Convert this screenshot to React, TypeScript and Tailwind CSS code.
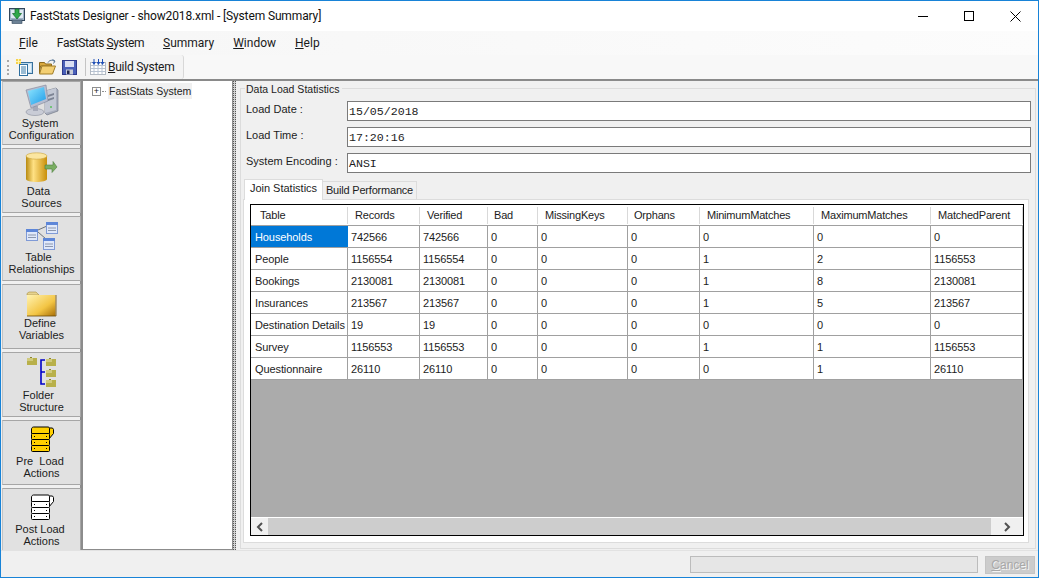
import type { ReactNode } from "react";

const COLS = "grid grid-cols-[97px_72px_68px_50px_90px_72px_114px_117px_92px]";

const HEADERS = [
  { label: "Table", pad: "pl-[9px]" },
  { label: "Records", pad: "pl-[7px]" },
  { label: "Verified", pad: "pl-[7px]" },
  { label: "Bad", pad: "pl-[6px]" },
  { label: "MissingKeys", pad: "pl-[7px]" },
  { label: "Orphans", pad: "pl-[6px]" },
  { label: "MinimumMatches", pad: "pl-[7px]" },
  { label: "MaximumMatches", pad: "pl-[7px]" },
  { label: "MatchedParent", pad: "pl-[7px]" },
];

const ROWS = [
  ["Households", "742566", "742566", "0", "0", "0", "0", "0", "0"],
  ["People", "1156554", "1156554", "0", "0", "0", "1", "2", "1156553"],
  ["Bookings", "2130081", "2130081", "0", "0", "0", "1", "8", "2130081"],
  ["Insurances", "213567", "213567", "0", "0", "0", "1", "5", "213567"],
  ["Destination Details", "19", "19", "0", "0", "0", "0", "0", "0"],
  ["Survey", "1156553", "1156553", "0", "0", "0", "1", "1", "1156553"],
  ["Questionnaire", "26110", "26110", "0", "0", "0", "0", "1", "26110"],
];

function AppIcon() {
  return (
    <svg width="16" height="16" viewBox="0 0 16 16">
      <rect x="0.5" y="0.5" width="15" height="12" fill="#9fb4c8" stroke="#33475c" />
      <rect x="2" y="2" width="12" height="8" fill="#dfe9f2" />
      <rect x="3" y="12" width="10" height="3.5" fill="#6d8296" stroke="#33475c" strokeWidth="0.6" />
      <path d="M6 1h4v4.5h2.5L8 11 3.5 5.5H6z" fill="#2fa84a" stroke="#11692a" strokeWidth="0.7" />
    </svg>
  );
}

function NewIcon() {
  return (
    <svg width="17" height="17" viewBox="0 0 17 17">
      <rect x="3.5" y="3.5" width="13" height="11" fill="#bcd9ee" stroke="#37709c" />
      <rect x="9" y="5" width="6" height="8" fill="#e6f2fa" />
      <rect x="3.5" y="5.5" width="8" height="11" fill="#fff" stroke="#2f6f9f" />
      <path d="M5 8h5M5 10h5M5 12h5M5 14h5" stroke="#3578a8" />
      <path d="M0 0h5v5H0z" fill="#f6d24a" />
      <path d="M2.5 0v5M0 2.5h5" stroke="#fff3b0" />
    </svg>
  );
}

function OpenIcon() {
  return (
    <svg width="17" height="16" viewBox="0 0 17 16">
      <path d="M0.5 3.5h5l1 1.5h6v2h-11l-1 7z" fill="#d9a93f" stroke="#8c6a1e" />
      <path d="M3 7h13.5l-3 8H0.5z" fill="#f3cf73" stroke="#a07c26" />
      <path d="M9 3.5C10.5 1 13 .8 15 2" fill="none" stroke="#4d6d8f" />
      <path d="M13.5 0.5l2.5 1.5-1.5 2.5" fill="none" stroke="#4d6d8f" />
    </svg>
  );
}

function SaveIcon() {
  return (
    <svg width="15" height="15" viewBox="0 0 15 15">
      <rect x="0.5" y="0.5" width="14" height="14" fill="#4a60b8" stroke="#2f3b8c" />
      <rect x="3" y="1" width="9" height="6" fill="#d9def2" />
      <rect x="4" y="9.5" width="7" height="5" fill="#c9cdd8" />
      <rect x="5" y="10.5" width="2.5" height="3.5" fill="#20264f" />
    </svg>
  );
}

function BuildIcon() {
  return (
    <svg width="16" height="16" viewBox="0 0 16 16">
      <rect x="0.5" y="3.5" width="15" height="12" fill="#fff" stroke="#6c7a8c" strokeDasharray="1 1" />
      <path d="M1 6.5h14M1 9.5h14M1 12.5h14M4 4v11M8 4v11M12 4v11" stroke="#b8c3d2" />
      <path d="M3.5 0v3H2l2 3 2-3H4.5V0zM8 0v3H6.5l2 3 2-3H9V0zM12 0v3h-1.5l2 3 2-3H13V0z" fill="#2050b8" />
    </svg>
  );
}

function ComputerIcon() {
  return (
    <svg width="36" height="35" viewBox="0 0 36 35">
      <defs>
        <linearGradient id="screen" x1="0" y1="0" x2="1" y2="1">
          <stop offset="0" stopColor="#8fe6ff" />
          <stop offset="1" stopColor="#1e9be8" />
        </linearGradient>
      </defs>
      <path d="M21 9l11-3 2 2v21l-11 4-2-2z" fill="#a8aebd" stroke="#6a7080" strokeWidth="0.6" />
      <path d="M21 9l11-3v22l-11 3z" fill="#c3c8d4" />
      <path d="M24 13l6-2v2l-6 2zM24 17l6-2v2l-6 2z" fill="#7d8494" />
      <circle cx="27" cy="25" r="1" fill="#59c15a" />
      <ellipse cx="11" cy="30" rx="9" ry="3.5" fill="#c9ccd6" stroke="#888d9c" strokeWidth="0.6" />
      <path d="M9 24h5v5H9z" fill="#a5a9b8" />
      <path d="M2 8l20-5 2 16-17 7z" fill="#b6bcd0" stroke="#7d8396" strokeWidth="0.6" />
      <path d="M4 9l16-4 2 12-15 6z" fill="url(#screen)" />
    </svg>
  );
}

function DataIcon() {
  return (
    <svg width="36" height="36" viewBox="0 0 36 36">
      <defs>
        <linearGradient id="cyl" x1="0" y1="0" x2="1" y2="0">
          <stop offset="0" stopColor="#b88a10" />
          <stop offset="0.35" stopColor="#ffe184" />
          <stop offset="1" stopColor="#c98f0a" />
        </linearGradient>
      </defs>
      <path d="M2 7v23c0 4 21 4 21 0V7z" fill="url(#cyl)" />
      <ellipse cx="12.5" cy="7" rx="10.5" ry="3.2" fill="#fbe6a0" stroke="#c9a23a" strokeWidth="0.6" />
      <path d="M21 16h8v-3.5L33 18l-5 5.5V20h-7z" fill="#79ad62" stroke="#4e8040" strokeWidth="0.6" />
    </svg>
  );
}

function MiniTable({ x, y }: { x: number; y: number }) {
  return (
    <g>
      <rect x={x + 0.5} y={y + 0.5} width="11" height="11" fill="#dfe8fa" stroke="#7f9ad6" />
      <rect x={x} y={y} width="12" height="3" fill="#5d86d8" />
      <path d={`M${x + 2} ${y + 6}h8M${x + 2} ${y + 8.5}h8`} stroke="#8c97ad" />
    </g>
  );
}

function TablesIcon() {
  return (
    <svg width="36" height="34" viewBox="0 0 36 34">
      <path d="M14 13l9-4M14 15l8 7" stroke="#6d7278" fill="none" />
      <MiniTable x={2} y={12} />
      <MiniTable x={22} y={5} />
      <MiniTable x={19} y={21} />
    </svg>
  );
}

function FolderIcon() {
  return (
    <svg width="36" height="32" viewBox="0 0 36 32">
      <defs>
        <linearGradient id="fold" x1="0" y1="0" x2="1" y2="1">
          <stop offset="0" stopColor="#fff3b2" />
          <stop offset="0.6" stopColor="#f3c544" />
          <stop offset="1" stopColor="#a96f06" />
        </linearGradient>
      </defs>
      <path d="M3 10V8.5L5 7h7l3 3z" fill="#e5d28f" stroke="#a98f3c" strokeWidth="0.6" />
      <rect x="3" y="10" width="28.5" height="21" fill="url(#fold)" />
      <path d="M3 31h29V10" fill="none" stroke="#6b4a06" strokeWidth="0.8" />
    </svg>
  );
}

function OliveFolder({ x, y }: { x: number; y: number }) {
  return (
    <g>
      <rect x={x} y={y} width="10" height="7" fill="#b8b04a" />
      <rect x={x} y={y} width="6" height="3" fill="#d0ca7c" />
      <rect x={x + 3} y={y - 1} width="2" height="1" fill="#8c8530" />
    </g>
  );
}

function StructureIcon() {
  return (
    <svg width="36" height="36" viewBox="0 0 36 36">
      <OliveFolder x={3} y={5} />
      <OliveFolder x={22} y={6} />
      <OliveFolder x={22} y={17} />
      <OliveFolder x={22} y={27} />
      <path d="M21 7h-4v24h4M17 19h4" stroke="#0000c8" strokeWidth="1.6" fill="none" />
    </svg>
  );
}

function StackIcon({ fill }: { fill: string }) {
  return (
    <svg width="36" height="34" viewBox="0 0 36 34">
      <path d="M24 7h4.5l1 1.5v4l-5 6z" fill={fill} stroke="#000" strokeWidth="1" />
      <path d="M7.5 12.5V8c0-1 1-2 2-2h14.500c1 0 1.500 1 1.500 2v4.500z" fill={fill} stroke="#000" strokeWidth="1" />
      <rect x="7.5" y="12.5" width="18" height="6" rx="1" fill={fill} stroke="#000" />
      <rect x="7.5" y="18.5" width="18" height="6" rx="1" fill={fill} stroke="#000" />
      <rect x="7.5" y="24.5" width="18" height="6" rx="1" fill={fill} stroke="#000" />
      <path d="M10 15.5h1M22 15.5h1M10 21.5h1M22 21.5h1M10 27.5h1M22 27.5h1" stroke="#000" />
    </svg>
  );
}

function NavButton({ icon, box, first, second, height = "h-[65px]" }: { icon: ReactNode; box: string; first: string; second: string; height?: string }) {
  return (
    <button className={`flex w-[79px] shrink-0 flex-col items-center border border-[#a6a6a6] border-l-[#c4c4c4] bg-[#e1e1e1] text-[11px] leading-[12px] text-[#1c1c1c] ${height}`}>
      <span className={`flex w-full justify-center ${box}`}>{icon}</span>
      <span className="whitespace-pre">{first}</span>
      <span className="whitespace-pre">{second}</span>
    </button>
  );
}

function Field({ label, value }: { label: string; value: string }) {
  return (
    <div className="flex h-[20px] items-center pl-[3px]">
      <span className="w-[101px] shrink-0 pb-[4px] text-[11px] text-[#1c1c1c]">{label}</span>
      <div className="flex h-[20px] flex-1 items-center border border-[#7a7a7a] bg-white pl-px pt-[2px] font-['Liberation_Mono',monospace] text-[11.6px] text-[#1c1c1c]">
        {value}
      </div>
    </div>
  );
}

function Chevron({ d }: { d: string }) {
  return (
    <svg width="8" height="10" viewBox="0 0 8 10">
      <path d={d} fill="none" stroke="#505050" strokeWidth="2" />
    </svg>
  );
}

export default function App() {
  return (
    <div className="flex h-[578px] w-[1039px] flex-col overflow-hidden border border-[#1883d7] bg-[#f0f0f0] font-['Liberation_Sans',sans-serif]">
      {/* Title bar */}
      <div className="flex h-[30px] shrink-0 items-center bg-white">
        <div className="ml-[8px] mr-[5px] flex">
          <AppIcon />
        </div>
        <span className="font-['Roboto',sans-serif] text-[12px] tracking-[-0.13px] text-[#111]">
          FastStats Designer - show2018.xml - [System Summary]
        </span>
        <div className="ml-auto flex h-full">
          <div className="flex w-[46px] items-center justify-center">
            <div className="h-px w-[10px] bg-black" />
          </div>
          <div className="flex w-[46px] items-center justify-center">
            <div className="h-[10px] w-[10px] border border-black" />
          </div>
          <div className="flex w-[46px] items-center justify-center">
            <svg width="11" height="11" viewBox="0 0 11 11">
              <path d="M0.500 0.500l10 10M10.500 0.500l-10 10" stroke="#000" fill="none" />
            </svg>
          </div>
        </div>
      </div>

      {/* Menu */}
      <div className="flex h-[24px] shrink-0 items-center gap-[19px] bg-gradient-to-r from-[#f6f6f6] to-[#fcfcfc] pl-[18px] font-['Roboto',sans-serif] text-[12px] text-[#1a1a1a]">
        <span><u>F</u>ile</span>
        <span className="tracking-[-0.4px]">FastStats <u>S</u>ystem</span>
        <span><u>S</u>ummary</span>
        <span><u>W</u>indow</span>
        <span><u>H</u>elp</span>
      </div>

      {/* Toolbar */}
      <div className="flex h-[26px] shrink-0 items-center border-b-2 border-[#8a8a8a] bg-[#f8f8f8]">
        <div className="flex h-[24px] items-center rounded-r-[3px] border-r border-[#d8d8d8] bg-[#f4f4f4] pr-[8px]">
          <div className="ml-[6px] mr-[7px] h-[15px] w-[2px] border-l-2 border-dotted border-[#a8a8a8]" />
          <div className="flex w-[69px] items-center gap-[6px]">
            <NewIcon />
            <OpenIcon />
            <SaveIcon />
          </div>
          <div className="mr-[4px] h-[18px] w-px bg-[#c4c4c4]" />
          <BuildIcon />
          <span className="ml-[2px] font-['Roboto',sans-serif] text-[12px] tracking-[-0.25px] text-[#1a1a1a]"><u>B</u>uild System</span>
        </div>
      </div>

      {/* Main area */}
      <div className="flex min-h-0 flex-1">
        <div className="flex w-[81px] shrink-0 flex-col gap-[3px] border-r-2 border-[#8c8c8c] bg-[#f0f0f0] pl-px">
          <NavButton icon={<ComputerIcon />} box="h-[35px]" first="System " second="Configuration" height="h-[64px]" />
          <NavButton icon={<DataIcon />} box="h-[36px]" first="Data  " second="Sources" />
          <NavButton icon={<TablesIcon />} box="h-[34px]" first="Table  " second="Relationships" />
          <NavButton icon={<FolderIcon />} box="h-[32px]" first="Define " second="Variables" />
          <NavButton icon={<StructureIcon />} box="h-[36px]" first="Folder  " second="Structure" />
          <NavButton icon={<StackIcon fill="#ffd000" />} box="h-[34px]" first="Pre  Load " second="Actions" />
          <NavButton icon={<StackIcon fill="#ffffff" />} box="h-[34px]" first="Post Load " second="Actions" />
        </div>

        {/* Tree */}
        <div className="w-[151px] shrink-0 border-x border-b border-[#8c8c8c] bg-white">
          <div className="ml-[9px] mt-[2px] flex h-[16px] items-center">
            <div className="flex h-[9px] w-[9px] items-center justify-center border border-[#8e8f8f]">
              <span className="text-[9px] leading-[7px] text-[#222]">+</span>
            </div>
            <div className="ml-px h-0 w-[4px] border-t border-dotted border-[#8e8f8f]" />
            <span className="ml-[2px] whitespace-nowrap bg-[#f0f0f0] px-px text-[10.5px] leading-[16px] text-[#1c1c1c]">FastStats System</span>
          </div>
        </div>

        {/* Splitter */}
        <div className="w-[3px] shrink-0 border-x border-dotted border-[#555] bg-[#d0d0d0]" />

        {/* Summary panel */}
        <div className="min-w-0 flex-1 pb-[1px] pl-[4px] pr-[2px] pt-[7px]">
          <div className="relative flex h-full flex-col border border-[#dcdcdc] pl-[2px] pr-[4px] pt-[12px]">
            <div className="absolute -top-[7px] left-[4px] bg-[#f0f0f0] pl-px pr-[3px] text-[10.5px] leading-[14px] text-[#1c1c1c]">Data Load Statistics</div>
            <div className="flex flex-col gap-[6px]">
              <Field label="Load Date :" value="15/05/2018" />
              <Field label="Load Time :" value="17:20:16" />
              <Field label="System Encoding :" value="ANSI" />
            </div>

            {/* Tabs */}
            <div className="mt-[5px] flex h-[21px] items-end pl-px text-[11px] text-[#1c1c1c]">
              <div className="z-10 -mb-px flex h-[21px] w-[79px] items-center justify-center whitespace-nowrap border border-b-0 border-[#dcdcdc] bg-white pb-[3px]">Join Statistics</div>
              <div className="flex h-[18px] w-[94px] items-center justify-center whitespace-nowrap border border-b-0 border-l-0 border-[#dcdcdc] bg-[#f0f0f0] tracking-[-0.2px]">Build Performance</div>
            </div>
            <div className="mb-[5px] mr-[2px] flex min-h-0 flex-1 flex-col border border-[#dcdcdc] bg-white pb-[6px] pl-[6px] pr-[4px] pt-[4px]">
              <div className="flex min-h-0 flex-1 flex-col border border-black bg-white text-[11px] tracking-[-0.1px] text-[#1c1c1c]">
                <div className={`${COLS} h-[21px] shrink-0 border-b border-[#a0a0a0]`}>
                  {HEADERS.map(h => (
                    <div key={h.label} className={`mt-[2px] flex h-[17px] items-center whitespace-nowrap border-r border-[#d9d9d9] tracking-[-0.2px] ${h.pad}`}>
                      {h.label}
                    </div>
                  ))}
                </div>
                {ROWS.map((row, r) => (
                  <div key={row[0]} className={`${COLS} h-[22px] shrink-0 border-b border-[#a0a0a0]`}>
                    {row.map((cell, c) => (
                      <div
                        key={c}
                        className={
                          r === 0 && c === 0
                            ? "flex items-center whitespace-nowrap bg-[#0078d7] pl-[4px] pt-px text-white"
                            : "flex items-center whitespace-nowrap border-r border-[#a0a0a0] pl-[3px] pt-px"
                        }
                      >
                        {c === 0 && r !== 0 ? <span className="pl-px">{cell}</span> : cell}
                      </div>
                    ))}
                  </div>
                ))}
                <div className="min-h-0 flex-1 bg-[#ababab]" />
                <div className="flex h-[18px] shrink-0 items-center border-t border-white bg-[#f0f0f0]">
                  <div className="flex w-[17px] justify-center">
                    <Chevron d="M6 1L2 5l4 4" />
                  </div>
                  <div className="h-full flex-1 bg-[#cdcdcd]" />
                  <div className="flex w-[32px] justify-center">
                    <Chevron d="M2 1l4 4-4 4" />
                  </div>
                </div>
              </div>
            </div>
          </div>
        </div>
      </div>

      {/* Status bar */}
      <div className="flex h-[27px] shrink-0 items-start border-t border-[#e2e2e2] bg-[#f0f0f0] pt-[5px]">
        <div className="ml-[689px] h-[17px] w-[288px] border border-[#bcbcbc] bg-[#e6e6e6]" />
        <div className="ml-[7px] flex h-[18px] w-[50px] items-center justify-center border border-[#c4c4c4] bg-[#cccccc] text-[12px] text-[#a8a8a8] [text-shadow:1px_1px_0_#f4f4f4]">
          <span><u>C</u>ancel</span>
        </div>
      </div>
    </div>
  );
}
